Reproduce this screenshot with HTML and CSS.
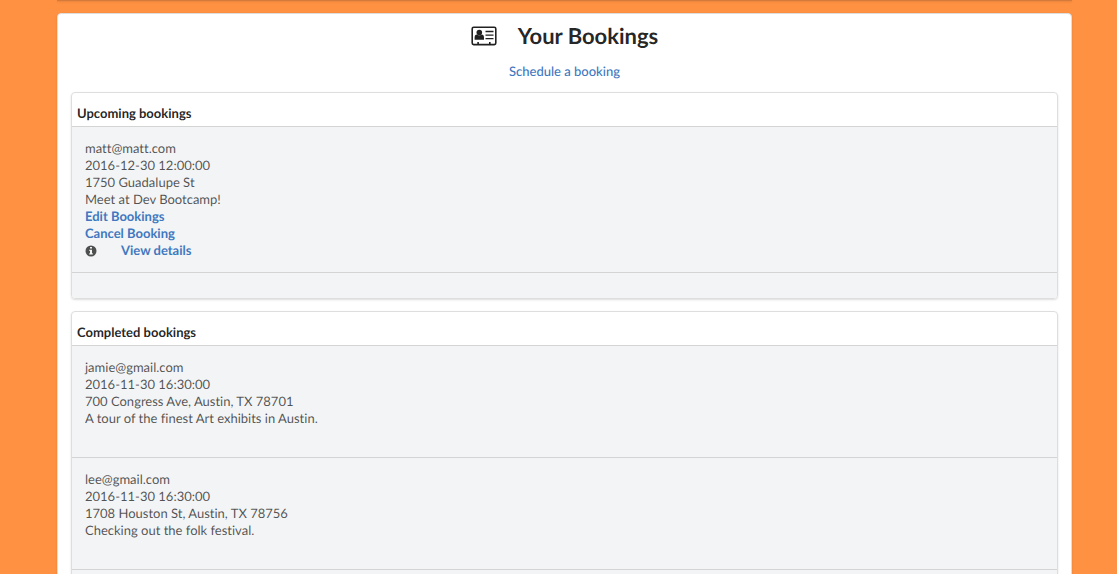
FILE: index.html
```html
<!DOCTYPE html>
<html lang="en">
<head>
<meta charset="utf-8">
<title>Your Bookings</title>
<link rel="stylesheet" href="styles.css">
</head>
<body>
<div class="page">
  <div class="previous-segment"></div>
  <main class="segment">
    <h1 class="title">
      <svg class="card-icon" viewBox="0 0 26 20" aria-hidden="true">
        <rect x="1.2" y="1.2" width="23.6" height="17.4" rx="1.5" fill="none" stroke="currentColor" stroke-width="1.6"/>
        <circle cx="8.3" cy="6.6" r="2.8" fill="currentColor"/>
        <path d="M3.6 13.8V11.7Q3.6 8.6 6 8.6Q8.3 10.4 10.6 8.6Q13 8.6 13 11.7V13.8Z" fill="currentColor"/>
        <path d="M14.5 5.5h8M14.5 9.1h8M14.5 12.7h8" stroke="currentColor" stroke-width="1.3"/>
        <path d="M6.3 18v-2h1.6v2M18 18v-2h1.6v2" fill="currentColor"/>
      </svg>
      <span>Your Bookings</span>
    </h1>
    <p class="schedule"><a href="#schedule">Schedule a booking</a></p>

    <section class="panel">
      <h2 class="panel-title">Upcoming bookings</h2>
      <div class="row">
        <div>matt@matt.com</div>
        <div>2016-12-30 12:00:00</div>
        <div>1750 Guadalupe St</div>
        <div>Meet at Dev Bootcamp!</div>
        <div><a class="strong" href="#edit">Edit Bookings</a></div>
        <div><a class="strong" href="#cancel">Cancel Booking</a></div>
        <div class="details">
          <svg class="info-icon" viewBox="0 0 12 12" aria-hidden="true">
            <circle cx="6" cy="6" r="5.5" fill="currentColor"/>
            <path d="M5 2h2v1.5H5zM4.3 4.7H7v3.6h.8v1.3H4.3V8.3H5V6h-.7z" fill="#f3f4f5"/>
          </svg>
          <a class="strong" href="#details">View details</a>
        </div>
      </div>
      <div class="row row-empty"></div>
    </section>

    <section class="panel">
      <h2 class="panel-title">Completed bookings</h2>
      <div class="row">
        <div>jamie@gmail.com</div>
        <div>2016-11-30 16:30:00</div>
        <div>700 Congress Ave, Austin, TX 78701</div>
        <div>A tour of the finest Art exhibits in Austin.</div>
        <br>
      </div>
      <div class="row">
        <div>lee@gmail.com</div>
        <div>2016-11-30 16:30:00</div>
        <div>1708 Houston St, Austin, TX 78756</div>
        <div>Checking out the folk festival.</div>
        <br>
      </div>
      <div class="row row-empty"></div>
    </section>
  </main>
</div>
</body>
</html>
```
FILE: styles.css
```css
* {
  box-sizing: border-box;
}

body {
  margin: 0;
  background: #ff9142;
  color: rgba(0, 0, 0, 0.87);
  font: 13px/17px Lato, sans-serif;
  font-variant-ligatures: none;
  text-rendering: geometricPrecision;
  overflow: hidden;
}

a {
  color: #4078c0;
  text-decoration: none;
}

.page {
  padding: 0 45px 13px 57px;
}

.previous-segment {
  height: 1px;
  margin-bottom: 12px;
  border-bottom: 1px solid #d47a3a;
  box-shadow: 0 1px 2px 0 rgba(34, 36, 38, 0.15);
}

.segment {
  padding: 8px 13px 13px;
  background: #fff;
  border: 1px solid #dededf;
  border-radius: 4px;
  box-shadow: 0 1px 2px 0 rgba(34, 36, 38, 0.15);
}

.title {
  display: flex;
  align-items: center;
  justify-content: center;
  gap: 21px;
  margin: 0 0 13px;
  font-size: 22px;
  line-height: 28px;
}

.card-icon {
  width: 26px;
  height: 20px;
}

.schedule {
  margin: 0 0 12px;
  text-align: center;
}

.schedule a {
  font-weight: 500;
}

.panel {
  margin-bottom: 12px;
  border: 1px solid #dededf;
  border-radius: 4px;
  box-shadow: 0 1px 2px 0 rgba(34, 36, 38, 0.15);
  overflow: hidden;
}

.panel-title {
  margin: 0;
  padding: 12px 5px 4px;
  font-size: 13px;
  line-height: 17px;
}

.row {
  padding: 13px;
  background: #f3f4f5;
  border-top: 1px solid #d4d4d5;
  color: rgba(0, 0, 0, 0.68);
}

.row-empty {
  padding: 0;
  height: 26px;
}

.strong {
  font-weight: 700;
}

.details {
  display: flex;
  align-items: center;
  gap: 24px;
}

.info-icon {
  width: 12px;
  height: 12px;
}
```
